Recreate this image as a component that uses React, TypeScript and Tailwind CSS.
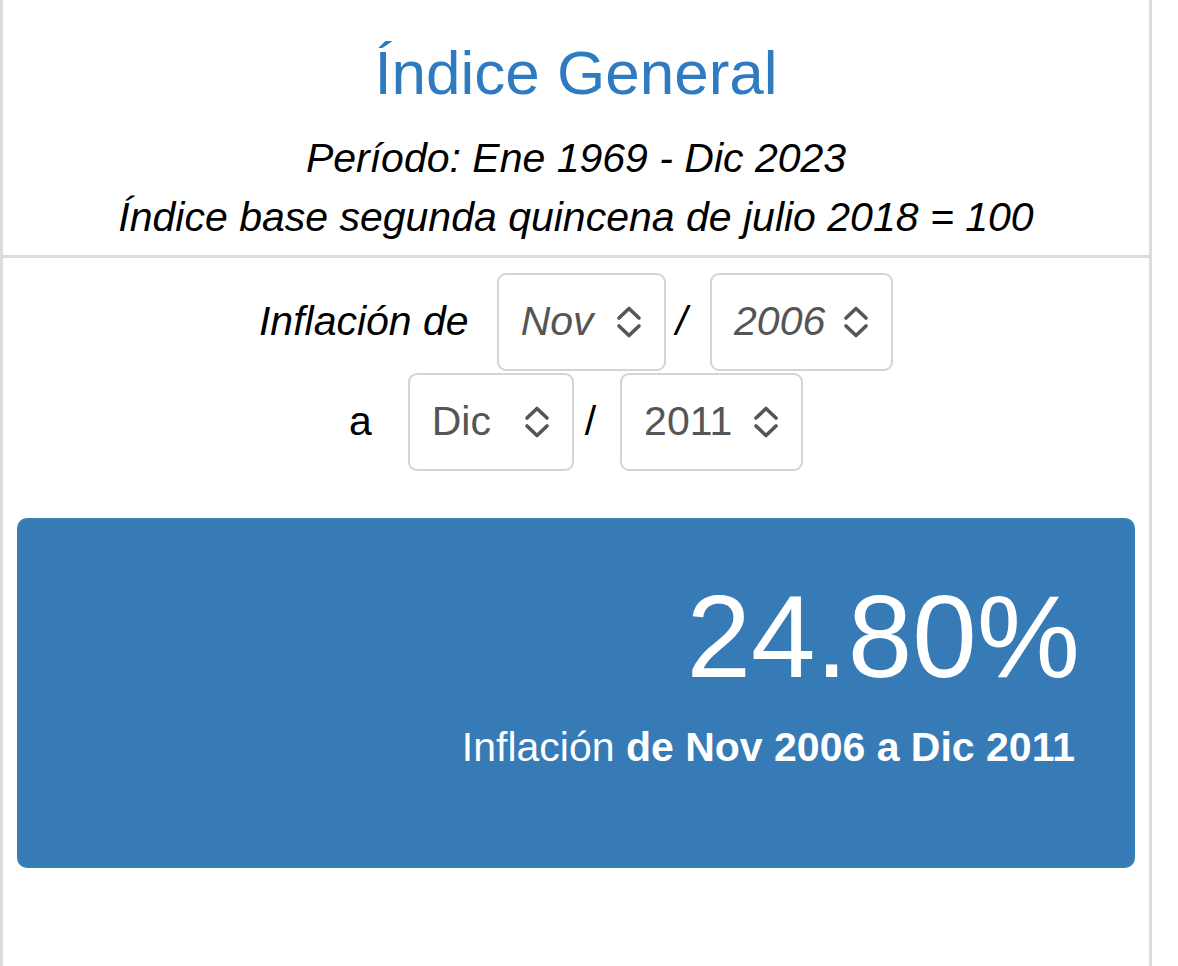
import React from 'react'

const font = { fontFamily: '"Liberation Sans", Arial, sans-serif' }

function Chevrons() {
  return (
    <svg width="26" height="32" viewBox="0 0 26 32" fill="none" className="shrink-0">
      <path d="M3 12 L13 2.5 L23 12" stroke="#555" strokeWidth="3.6" strokeLinecap="round" strokeLinejoin="round" />
      <path d="M3 20 L13 29.5 L23 20" stroke="#555" strokeWidth="3.6" strokeLinecap="round" strokeLinejoin="round" />
    </svg>
  )
}

function FakeSelect({ value, width }: { value: string; width: string }) {
  return (
    <div
      className={`${width} h-[98px] flex items-center justify-between pl-[22px] pr-[22px] border-2 border-[#d4d4d4] rounded-[9px] text-[#555] bg-white`}
    >
      <span>{value}</span>
      <Chevrons />
    </div>
  )
}

export default function App() {
  return (
    <div className="min-h-screen bg-white text-black" style={font}>
      <div className="w-[1152px] min-h-[966px] border-x-[3px] border-[#dcdcdc]">
        <header className="border-b-[3px] border-[#dcdcdc] text-center pt-[38px] pb-[8px]">
          <h1 className="text-[62px] leading-[70px] text-[#2f7bc1] font-normal">Índice General</h1>
          <p className="mt-[21px] text-[41px] leading-[59px] italic">Período: Ene 1969 - Dic 2023</p>
          <p className="text-[41px] leading-[59px] italic">Índice base segunda quincena de julio 2018 = 100</p>
        </header>

        <div className="pt-[15px] flex flex-col items-center gap-[2px] text-[41px]">
          <div className="flex items-center italic">
            <span className="mr-[28px]">Inflación de</span>
            <FakeSelect value="Nov" width="w-[169px]" />
            <span className="ml-[10px] mr-[23px]">/</span>
            <FakeSelect value="2006" width="w-[183px]" />
          </div>
          <div className="flex items-center">
            <span className="mr-[36px]">a</span>
            <FakeSelect value="Dic" width="w-[166px]" />
            <span className="ml-[11px] mr-[24px]">/</span>
            <FakeSelect value="2011" width="w-[183px]" />
          </div>
        </div>

        <div className="mx-[14px] mt-[47px] h-[350px] rounded-[10px] border-2 border-[#3584b0] bg-[#377bb6] text-white text-right pr-[53px] pt-[51px]">
          <div className="text-[116px] leading-[133px] font-normal">24.80%</div>
          <div className="mt-[20px] pr-[5px] text-[41px] leading-[46px]">
            Inflación <b className="font-bold">de Nov 2006 a Dic 2011</b>
          </div>
        </div>
      </div>
    </div>
  )
}
